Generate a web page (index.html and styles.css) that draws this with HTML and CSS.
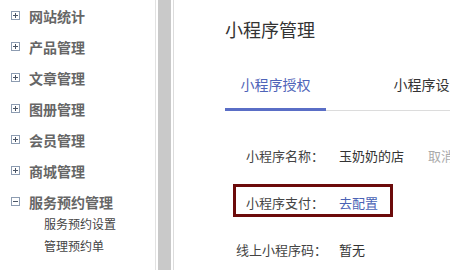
FILE: index.html
```html
<!DOCTYPE html>
<html lang="zh-CN">
<head>
<meta charset="utf-8">
<title>小程序管理</title>
<link rel="stylesheet" href="styles.css">
</head>
<body>
<div class="app">
  <aside class="sidebar">
    <ul class="menu">
      <li class="menu-item"><svg class="toggle" width="9" height="9" viewBox="0 0 9 9"><rect x="0.5" y="0.5" width="8" height="8" fill="none" stroke="#8d9cb1"/><path d="M2 4.5H7M4.5 2V7" stroke="#4a5566"/></svg><span>网站统计</span></li>
      <li class="menu-item"><svg class="toggle" width="9" height="9" viewBox="0 0 9 9"><rect x="0.5" y="0.5" width="8" height="8" fill="none" stroke="#8d9cb1"/><path d="M2 4.5H7M4.5 2V7" stroke="#4a5566"/></svg><span>产品管理</span></li>
      <li class="menu-item"><svg class="toggle" width="9" height="9" viewBox="0 0 9 9"><rect x="0.5" y="0.5" width="8" height="8" fill="none" stroke="#8d9cb1"/><path d="M2 4.5H7M4.5 2V7" stroke="#4a5566"/></svg><span>文章管理</span></li>
      <li class="menu-item"><svg class="toggle" width="9" height="9" viewBox="0 0 9 9"><rect x="0.5" y="0.5" width="8" height="8" fill="none" stroke="#8d9cb1"/><path d="M2 4.5H7M4.5 2V7" stroke="#4a5566"/></svg><span>图册管理</span></li>
      <li class="menu-item"><svg class="toggle" width="9" height="9" viewBox="0 0 9 9"><rect x="0.5" y="0.5" width="8" height="8" fill="none" stroke="#8d9cb1"/><path d="M2 4.5H7M4.5 2V7" stroke="#4a5566"/></svg><span>会员管理</span></li>
      <li class="menu-item"><svg class="toggle" width="9" height="9" viewBox="0 0 9 9"><rect x="0.5" y="0.5" width="8" height="8" fill="none" stroke="#8d9cb1"/><path d="M2 4.5H7M4.5 2V7" stroke="#4a5566"/></svg><span>商城管理</span></li>
      <li class="menu-item"><svg class="toggle" width="9" height="9" viewBox="0 0 9 9"><rect x="0.5" y="0.5" width="8" height="8" fill="none" stroke="#8d9cb1"/><path d="M2 4.5H7" stroke="#4a5566"/></svg><span>服务预约管理</span></li>
    </ul>
    <ul class="submenu">
      <li>服务预约设置</li>
      <li>管理预约单</li>
    </ul>
  </aside>
  <div class="splitter"></div>
  <main class="content">
    <h1 class="title">小程序管理</h1>
    <div class="tabs">
      <div class="tab active">小程序授权</div>
      <div class="tab">小程序设置</div>
    </div>
    <div class="rows">
      <div class="row"><span class="label">小程序名称：</span><span class="value">玉奶奶的店</span><span class="muted">取消授权</span></div>
      <div class="row boxed"><span class="label">小程序支付：</span><span class="value link">去配置</span></div>
      <div class="row"><span class="label">线上小程序码：</span><span class="value">暂无</span></div>
    </div>
  </main>
</div>
</body>
</html>
```

FILE: styles.css
```css
* { box-sizing: border-box; }
html, body {
  margin: 0;
  padding: 0;
  background: #fff;
  font-family: "Noto Sans CJK SC", "Noto Sans", sans-serif;
  overflow: hidden;
}
ul { list-style: none; margin: 0; padding: 0; }
.app {
  display: flex;
  width: 450px;
  height: 270px;
  overflow: hidden;
}
.sidebar {
  flex: 0 0 156px;
  border-right: 1px solid #e2e2e2;
  background: #fff;
}
.menu-item {
  display: flex;
  align-items: center;
  height: 31px;
  padding-left: 11px;
  font-size: 14px;
  font-weight: 700;
  color: #666;
}
.toggle { flex: 0 0 9px; margin-right: 9px; }
.submenu {
  margin-top: -4px;
  padding-left: 44px;
}
.submenu li {
  height: 22px;
  line-height: 22px;
  font-size: 12px;
  color: #444;
}
.splitter {
  flex: 0 0 13px;
  margin: 0 2px;
  background: #c9c9c9;
}
.content {
  flex: 1 0 auto;
  border-left: 1px solid #dcdcdc;
  padding-left: 51px;
  white-space: nowrap;
}
.title {
  margin: 17px 0 0;
  font-size: 18px;
  font-weight: 400;
  line-height: 24px;
  color: #333;
}
.tabs {
  display: flex;
  gap: 52px;
  margin-top: 20px;
  border-bottom: 1px solid #dcdcdc;
}
.tab {
  width: 101px;
  padding: 13px 0 14px;
  line-height: 20px;
  font-size: 14px;
  text-align: center;
  color: #333;
  border-bottom: 3px solid transparent;
  margin-bottom: -1px;
}
.tab.active {
  color: #4f64b8;
  border-bottom-color: #5a6ec6;
}
.rows {
  display: flex;
  flex-direction: column;
  align-items: flex-start;
  gap: 14px;
  margin-top: 26px;
  margin-left: 8px;
}
.row {
  display: flex;
  height: 33px;
  padding: 5px 12px 0 0;
  line-height: 22px;
  font-size: 13px;
  color: #333;
  border: 3px solid transparent;
}
.row.boxed { border-color: #6c0b0b; }
.label {
  width: 88px;
  text-align: right;
  color: #444;
}
.value { margin-left: 15px; color: #333; }
.link { color: #4a62b5; }
.muted { margin-left: 24px; color: #aaa; }
```
